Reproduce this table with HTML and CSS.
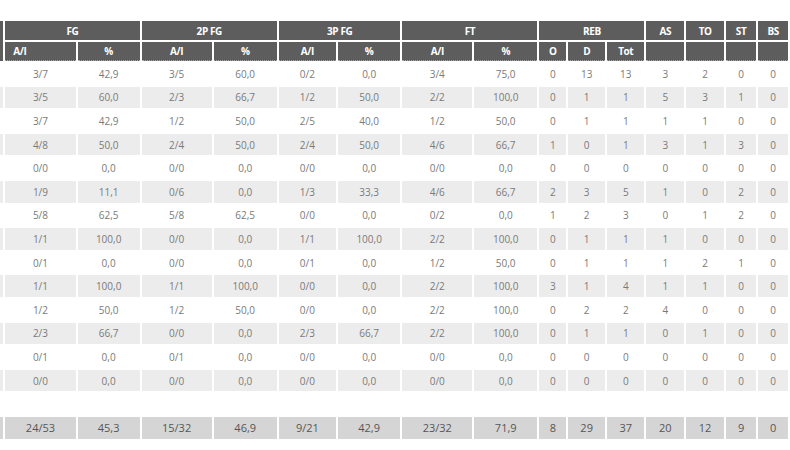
FILE: index.html
```html
<!DOCTYPE html>
<html lang="it">
<head>
<meta charset="utf-8">
<title>Statistiche</title>
<link rel="stylesheet" href="styles.css">
</head>
<body>
<div class="wrap">
<table class="stats">
  <colgroup>
    <col class="c-name">
    <col class="c-fga"><col class="c-fgp">
    <col class="c-2a"><col class="c-2p">
    <col class="c-3a"><col class="c-3p">
    <col class="c-fta"><col class="c-ftp">
    <col class="c-o"><col class="c-d"><col class="c-tot">
    <col class="c-as"><col class="c-to"><col class="c-st"><col class="c-bs">
  </colgroup>
  <thead>
    <tr class="h1">
      <th rowspan="2" class="name"></th>
      <th colspan="2">FG</th>
      <th colspan="2">2P FG</th>
      <th colspan="2">3P FG</th>
      <th colspan="2">FT</th>
      <th colspan="3">REB</th>
      <th>AS</th><th>TO</th><th>ST</th><th>BS</th>
    </tr>
    <tr class="h2">
      <th class="left">A/I</th><th>%</th>
      <th>A/I</th><th>%</th>
      <th>A/I</th><th>%</th>
      <th>A/I</th><th>%</th>
      <th>O</th><th>D</th><th>Tot</th>
      <th></th><th></th><th></th><th></th>
    </tr>
  </thead>
  <tbody>
    <tr><td class="name"></td><td>3/7</td><td>42,9</td><td>3/5</td><td>60,0</td><td>0/2</td><td>0,0</td><td>3/4</td><td>75,0</td><td>0</td><td>13</td><td>13</td><td>3</td><td>2</td><td>0</td><td>0</td></tr>
    <tr><td class="name"></td><td>3/5</td><td>60,0</td><td>2/3</td><td>66,7</td><td>1/2</td><td>50,0</td><td>2/2</td><td>100,0</td><td>0</td><td>1</td><td>1</td><td>5</td><td>3</td><td>1</td><td>0</td></tr>
    <tr><td class="name"></td><td>3/7</td><td>42,9</td><td>1/2</td><td>50,0</td><td>2/5</td><td>40,0</td><td>1/2</td><td>50,0</td><td>0</td><td>1</td><td>1</td><td>1</td><td>1</td><td>0</td><td>0</td></tr>
    <tr><td class="name"></td><td>4/8</td><td>50,0</td><td>2/4</td><td>50,0</td><td>2/4</td><td>50,0</td><td>4/6</td><td>66,7</td><td>1</td><td>0</td><td>1</td><td>3</td><td>1</td><td>3</td><td>0</td></tr>
    <tr><td class="name"></td><td>0/0</td><td>0,0</td><td>0/0</td><td>0,0</td><td>0/0</td><td>0,0</td><td>0/0</td><td>0,0</td><td>0</td><td>0</td><td>0</td><td>0</td><td>0</td><td>0</td><td>0</td></tr>
    <tr><td class="name"></td><td>1/9</td><td>11,1</td><td>0/6</td><td>0,0</td><td>1/3</td><td>33,3</td><td>4/6</td><td>66,7</td><td>2</td><td>3</td><td>5</td><td>1</td><td>0</td><td>2</td><td>0</td></tr>
    <tr><td class="name"></td><td>5/8</td><td>62,5</td><td>5/8</td><td>62,5</td><td>0/0</td><td>0,0</td><td>0/2</td><td>0,0</td><td>1</td><td>2</td><td>3</td><td>0</td><td>1</td><td>2</td><td>0</td></tr>
    <tr><td class="name"></td><td>1/1</td><td>100,0</td><td>0/0</td><td>0,0</td><td>1/1</td><td>100,0</td><td>2/2</td><td>100,0</td><td>0</td><td>1</td><td>1</td><td>1</td><td>0</td><td>0</td><td>0</td></tr>
    <tr><td class="name"></td><td>0/1</td><td>0,0</td><td>0/0</td><td>0,0</td><td>0/1</td><td>0,0</td><td>1/2</td><td>50,0</td><td>0</td><td>1</td><td>1</td><td>1</td><td>2</td><td>1</td><td>0</td></tr>
    <tr><td class="name"></td><td>1/1</td><td>100,0</td><td>1/1</td><td>100,0</td><td>0/0</td><td>0,0</td><td>2/2</td><td>100,0</td><td>3</td><td>1</td><td>4</td><td>1</td><td>1</td><td>0</td><td>0</td></tr>
    <tr><td class="name"></td><td>1/2</td><td>50,0</td><td>1/2</td><td>50,0</td><td>0/0</td><td>0,0</td><td>2/2</td><td>100,0</td><td>0</td><td>2</td><td>2</td><td>4</td><td>0</td><td>0</td><td>0</td></tr>
    <tr><td class="name"></td><td>2/3</td><td>66,7</td><td>0/0</td><td>0,0</td><td>2/3</td><td>66,7</td><td>2/2</td><td>100,0</td><td>0</td><td>1</td><td>1</td><td>0</td><td>1</td><td>0</td><td>0</td></tr>
    <tr><td class="name"></td><td>0/1</td><td>0,0</td><td>0/1</td><td>0,0</td><td>0/0</td><td>0,0</td><td>0/0</td><td>0,0</td><td>0</td><td>0</td><td>0</td><td>0</td><td>0</td><td>0</td><td>0</td></tr>
    <tr><td class="name"></td><td>0/0</td><td>0,0</td><td>0/0</td><td>0,0</td><td>0/0</td><td>0,0</td><td>0/0</td><td>0,0</td><td>0</td><td>0</td><td>0</td><td>0</td><td>0</td><td>0</td><td>0</td></tr>
    <tr class="spacer"><td colspan="16"></td></tr>
    <tr class="total"><td class="name"></td><td>24/53</td><td>45,3</td><td>15/32</td><td>46,9</td><td>9/21</td><td>42,9</td><td>23/32</td><td>71,9</td><td>8</td><td>29</td><td>37</td><td>20</td><td>12</td><td>9</td><td>0</td></tr>
  </tbody>
</table>
</div>
</body>
</html>
```
FILE: styles.css
```css
html, body {
  margin: 0;
  padding: 0;
  background: #ffffff;
}

.wrap {
  width: 790px;
  height: 450px;
  overflow: hidden;
  padding-top: 19px;
  box-sizing: border-box;
}

.stats {
  table-layout: fixed;
  border-collapse: separate;
  border-spacing: 2px 2px;
  margin-left: -2px;
  font-family: "Open Sans", "Noto Sans", sans-serif;
  font-size: 10px;
  color: #7a7a7a;
}

.c-name { width: 3.3px; }
.c-fga { width: 70.4px; }
.c-fgp { width: 62px; }
.c-2a { width: 70px; }
.c-2p { width: 63.3px; }
.c-3a { width: 57px; }
.c-3p { width: 62.7px; }
.c-fta { width: 69.6px; }
.c-ftp { width: 63.4px; }
.c-o { width: 26.8px; }
.c-d { width: 37px; }
.c-tot { width: 37.2px; }
.c-as { width: 38px; }
.c-to { width: 37.6px; }
.c-st { width: 30.4px; }
.c-bs { width: 29.6px; }

.stats th {
  background: #5d5d5d;
  color: #ffffff;
  font-weight: 700;
  font-size: 10px;
  letter-spacing: -0.4px;
  text-align: center;
  padding: 0;
  height: 19px;
  box-sizing: border-box;
  overflow: hidden;
  white-space: nowrap;
}

.stats .h2 th {
  border-bottom: 1px dotted #a8a8a8;
}

.stats .h2 th.left {
  text-align: left;
  padding-left: 8px;
}

.stats td {
  text-align: center;
  padding: 0;
  height: 21.6px;
  box-sizing: border-box;
  white-space: nowrap;
  overflow: hidden;
}

.stats tbody tr:nth-child(even) td {
  background: #ececec;
}

.stats tbody tr.spacer td {
  background: #ffffff;
}

.stats tbody tr.total td {
  background: #d5d5d5;
  color: #555555;
  font-size: 11px;
  height: 22px;
}
```
